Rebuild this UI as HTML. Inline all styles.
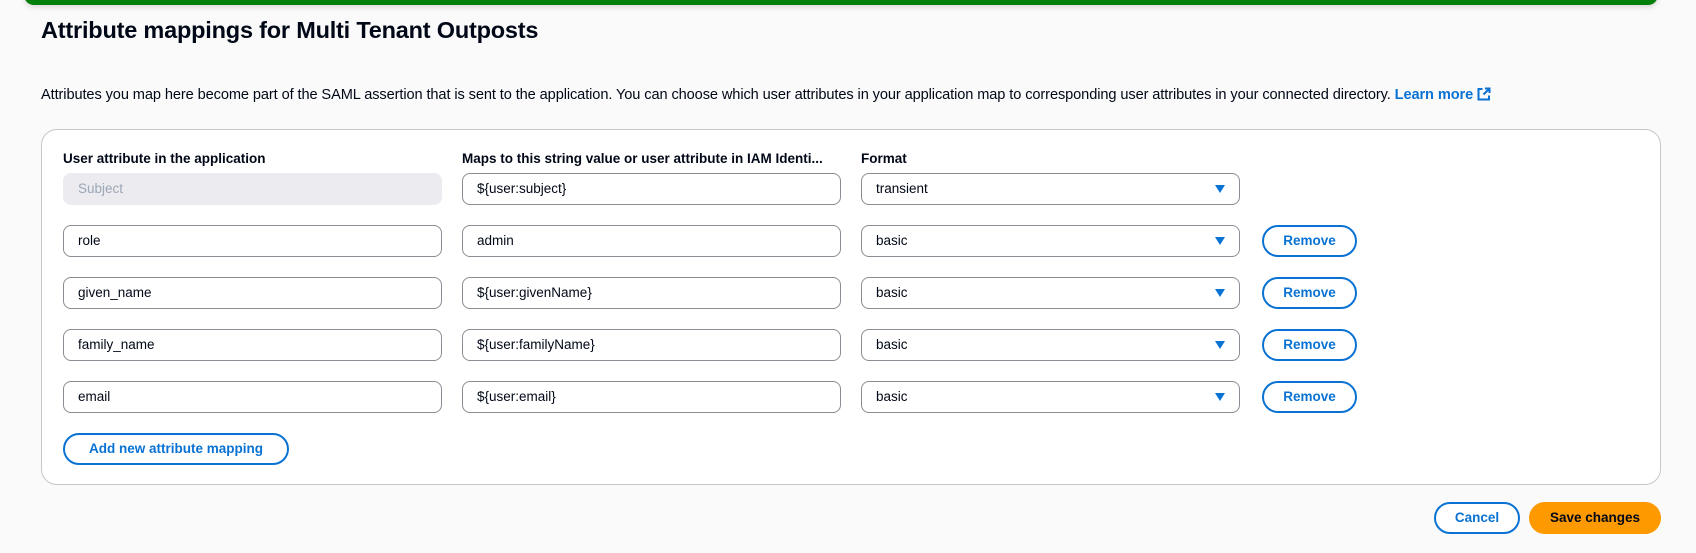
<!DOCTYPE html>
<html><head><style>
*{box-sizing:border-box;margin:0;padding:0}
body{width:1696px;height:553px;background:#fafafa;font-family:"Liberation Sans",sans-serif;color:#000716;position:relative;overflow:hidden}
.abs{position:absolute}
.green{left:24px;top:-6px;width:1634px;height:11px;background:#037f0c;border-radius:0 0 10px 10px;box-shadow:0 2px 6px rgba(0,0,0,.15)}
h1{position:absolute;left:41px;top:17px;font-size:23.5px;font-weight:bold;letter-spacing:-0.2px}
.desc{left:41px;top:87px;font-size:14.6px;white-space:nowrap;letter-spacing:-0.1px}
.desc a{color:#0972d3;font-weight:bold;text-decoration:none}
.box{left:41px;top:129px;width:1620px;height:356px;border:1px solid #c6c6cd;border-radius:16px;background:#fff}
.lbl{font-size:13.5px;font-weight:bold;top:151px;white-space:nowrap}
.in{height:32px;border:1px solid #8c8c94;border-radius:8px;background:#fff;font-size:13.5px;padding-left:14px;line-height:30px;white-space:nowrap}
.dis{background:#ebebf0;border-color:#ebebf0;color:#9ba7b6}
.arr{position:absolute;right:14px;top:11px;width:0;height:0;border-left:5px solid transparent;border-right:5px solid transparent;border-top:8px solid #0972d3}
.btn{height:32px;border:2px solid #0972d3;border-radius:16px;color:#0972d3;font-weight:bold;font-size:13.5px;text-align:center;line-height:28px;background:#fff;white-space:nowrap}
</style></head><body>
<div class="abs green"></div>
<h1>Attribute mappings for Multi Tenant Outposts</h1>
<div class="abs desc">Attributes you map here become part of the SAML assertion that is sent to the application. You can choose which user attributes in your application map to corresponding user attributes in your connected directory. <a>Learn more <svg width="14" height="14" viewBox="0 0 14 14" style="vertical-align:-2px"><path d="M8 1.5h4.5V6M12.5 1.5L6.5 7.5M5.5 2H1.5v10.5H12V8.5" fill="none" stroke="#0972d3" stroke-width="2"/></svg></a></div>
<div class="abs box"></div>
<div class="abs lbl" style="left:63px">User attribute in the application</div>
<div class="abs lbl" style="left:462px">Maps to this string value or user attribute in IAM Identi...</div>
<div class="abs lbl" style="left:861px">Format</div>

<div class="abs in dis" style="left:63px;top:173px;width:379px">Subject</div>
<div class="abs in" style="left:462px;top:173px;width:379px">${user:subject}</div>
<div class="abs in" style="left:861px;top:173px;width:379px">transient<span class="arr"></span></div>

<div class="abs in" style="left:63px;top:225px;width:379px">role</div>
<div class="abs in" style="left:462px;top:225px;width:379px">admin</div>
<div class="abs in" style="left:861px;top:225px;width:379px">basic<span class="arr"></span></div>
<div class="abs btn" style="left:1262px;top:225px;width:95px">Remove</div>

<div class="abs in" style="left:63px;top:277px;width:379px">given_name</div>
<div class="abs in" style="left:462px;top:277px;width:379px">${user:givenName}</div>
<div class="abs in" style="left:861px;top:277px;width:379px">basic<span class="arr"></span></div>
<div class="abs btn" style="left:1262px;top:277px;width:95px">Remove</div>

<div class="abs in" style="left:63px;top:329px;width:379px">family_name</div>
<div class="abs in" style="left:462px;top:329px;width:379px">${user:familyName}</div>
<div class="abs in" style="left:861px;top:329px;width:379px">basic<span class="arr"></span></div>
<div class="abs btn" style="left:1262px;top:329px;width:95px">Remove</div>

<div class="abs in" style="left:63px;top:381px;width:379px">email</div>
<div class="abs in" style="left:462px;top:381px;width:379px">${user:email}</div>
<div class="abs in" style="left:861px;top:381px;width:379px">basic<span class="arr"></span></div>
<div class="abs btn" style="left:1262px;top:381px;width:95px">Remove</div>

<div class="abs btn" style="left:63px;top:433px;width:226px">Add new attribute mapping</div>
<div class="abs btn" style="left:1434px;top:502px;width:86px">Cancel</div>
<div class="abs btn" style="left:1529px;top:502px;width:132px;background:#ff9900;border-color:#ff9900;color:#000716">Save changes</div>
</body></html>
